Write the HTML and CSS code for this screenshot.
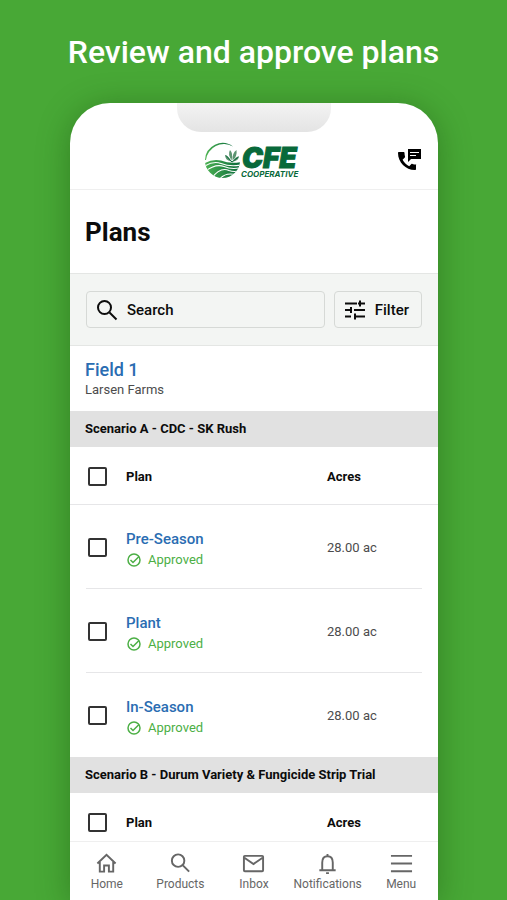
FILE: index.html
```html
<!DOCTYPE html>
<html lang="en">
<head>
<meta charset="utf-8">
<meta name="viewport" content="width=device-width, initial-scale=1">
<title>Plans</title>
<link rel="stylesheet" href="styles.css">
</head>
<body>
<h1 class="headline">Review and approve plans</h1>
<div class="phone">
  <div class="notch"></div>
  <header class="topbar">
    <svg class="logo" viewBox="0 0 102 42" role="img" aria-label="CFE Cooperative">
      <defs>
        <linearGradient id="leaf" x1="0" x2="1"><stop offset="0" stop-color="#4fb553"/><stop offset="1" stop-color="#08693a"/></linearGradient>
        <clipPath id="globe"><circle cx="19.500" cy="22.500" r="17.500"/></clipPath>
      </defs>
      <path d="M2 22A17.500 17.500 0 0 1 30 8.500A18 18 0 0 0 3 22Z" fill="url(#leaf)"/>
      <g clip-path="url(#globe)">
        <path d="M2 25Q10 20.500 18 22.500Q27 26 38 24V42H0Z" fill="url(#leaf)"/>
        <path d="M0 29Q10 22.500 18 25.500Q27 29 38 27M0 35Q12 25 21 28.500Q29 32 38 29.500M8 41Q17 28.500 26 32.500Q31 34.500 38 32.500M16 42Q22 33.500 34 37" fill="none" stroke="#fff" stroke-width="1.100"/>
      </g>
      <path d="M28 23.500Q26 18 22 17Q22 22 28 23.500ZM28.500 22.500Q24.500 16 27 12Q30.500 15.500 28.500 22.500ZM29.500 22.500Q29 15 33.500 12Q34.500 18.500 29.500 22.500ZM30 23.500Q32 18.500 36 18.500Q35 23 30 23.500Z" fill="#5c9470"/>
      <path d="M23 17.500L29 24L35.500 19" fill="none" stroke="#08693a"/>
      <text class="logo-name" x="39" y="30">CFE</text>
      <text class="logo-sub" x="38" y="39">COOPERATIVE</text>
    </svg>
    <button class="contact" type="button" aria-label="Contact">
      <svg viewBox="0 0 24 24"><path d="M20 15.500c-1.200 0-2.400-.2-3.600-.6-.3-.1-.7 0-1 .2l-2.200 2.200c-2.800-1.400-5.100-3.800-6.600-6.600l2.200-2.200c.3-.3.4-.7.2-1C8.700 6.400 8.500 5.200 8.500 4c0-.6-.4-1-1-1H3c-.6 0-1 .4-1 1 0 9.400 7.600 17 17 17 .6 0 1-.4 1-1v-3.500c0-.6.5-1 0-1z" transform="translate(-2 2)"/><path fill-rule="evenodd" d="M10 2h13v10H13l-3 3ZM12 5v1h9V5ZM12 8v1h6V8Z"/></svg>
    </button>
  </header>
  <main class="content">
    <h2 class="title">Plans</h2>
    <form class="tools">
      <div class="search">
        <svg viewBox="0 0 24 24"><circle cx="9.500" cy="9.500" r="6.500"/><path d="M14.500 14.500L21.500 21.500"/></svg>
        <input id="search" type="text" placeholder="Search" aria-label="Search">
      </div>
      <button class="filter" type="button">
        <svg viewBox="0 0 24 24"><path d="M2 5.500h12M15 5.500h7M17 2.500v6M2 12h6M11 12h11M8 9v6M2 18.500h6M11 18.500h11M12 15.500v6"/></svg>
        Filter
      </button>
    </form>
    <section class="field">
      <a class="field-name" href="#">Field 1</a>
      <p class="farm">Larsen Farms</p>
    </section>
    <h3 class="band">Scenario A - CDC - SK Rush</h3>
    <table class="plans">
      <thead>
        <tr><th class="tick"><input type="checkbox" aria-label="Select all plans in scenario A"></th><th>Plan</th><th class="acres">Acres</th></tr>
      </thead>
      <tbody>
        <tr>
          <td class="tick"><input type="checkbox" aria-label="Select Pre-Season"></td>
          <td class="name"><a class="plan" href="#">Pre-Season</a><span class="status"><svg viewBox="0 0 16 16"><circle cx="8" cy="8" r="6"/><path d="M4.500 8L7 10.500L13 4.500"/></svg>Approved</span></td>
          <td class="acres">28.00 ac</td>
        </tr>
        <tr>
          <td class="tick"><input type="checkbox" aria-label="Select Plant"></td>
          <td class="name"><a class="plan" href="#">Plant</a><span class="status"><svg viewBox="0 0 16 16"><circle cx="8" cy="8" r="6"/><path d="M4.500 8L7 10.500L13 4.500"/></svg>Approved</span></td>
          <td class="acres">28.00 ac</td>
        </tr>
        <tr>
          <td class="tick"><input type="checkbox" aria-label="Select In-Season"></td>
          <td class="name"><a class="plan" href="#">In-Season</a><span class="status"><svg viewBox="0 0 16 16"><circle cx="8" cy="8" r="6"/><path d="M4.500 8L7 10.500L13 4.500"/></svg>Approved</span></td>
          <td class="acres">28.00 ac</td>
        </tr>
      </tbody>
    </table>
    <h3 class="band">Scenario B - Durum Variety &amp; Fungicide Strip Trial</h3>
    <table class="plans">
      <thead>
        <tr><th class="tick"><input type="checkbox" aria-label="Select all plans in scenario B"></th><th>Plan</th><th class="acres">Acres</th></tr>
      </thead>
    </table>
  </main>
  <nav class="tabs">
    <a href="#"><svg viewBox="0 0 24 24"><path d="M2.500 12L12 3L21.500 12M5 10.500V20.500H9.500V14H14.500V20.500H19V10.500"/></svg>Home</a>
    <a href="#"><svg viewBox="0 0 24 24"><circle cx="9.500" cy="9" r="6.500"/><path d="M14.500 14L21 20.500"/></svg>Products</a>
    <a href="#"><svg viewBox="0 0 24 24"><rect x="2" y="4" width="20" height="16" rx="1"/><path d="M2.500 6L12 12.500L21.500 6"/></svg>Inbox</a>
    <a href="#"><svg viewBox="0 0 24 24"><path d="M3.500 19H20.500M6.500 19V11Q6.500 4.500 12 4.500Q17.500 4.500 17.500 11V19M12 2V4.500M10.500 22H13.500"/></svg>Notifications</a>
    <a href="#"><svg viewBox="0 0 24 24"><path d="M1 4H23M1 12H23M1 20H23"/></svg>Menu</a>
  </nav>
</div>
</body>
</html>
```
FILE: styles.css
```css
* { box-sizing: border-box; }

body {
  margin: 0;
  height: 100vh;
  display: flex;
  flex-direction: column;
  background: #48a836;
  color: #0c0c0c;
  font-family: Roboto, "Liberation Sans", sans-serif;
  overflow: hidden;
}

h1, h2, h3, p { margin: 0; }
a { text-decoration: none; color: inherit; }
svg { display: block; flex: none; }

.headline {
  padding: 32px 0 31px;
  color: #fff;
  font-size: 32px;
  line-height: 40px;
  font-weight: 500;
  text-align: center;
  white-space: nowrap;
}

.phone {
  position: relative;
  flex: 1;
  min-height: 0;
  display: flex;
  flex-direction: column;
  margin: 0 69px 0 70px;
  background: #fff;
  border-radius: 40px 40px 0 0;
  box-shadow: 0 4px 32px rgba(20, 70, 10, 0.4);
}

.notch {
  align-self: center;
  width: 154px;
  height: 29px;
  border-radius: 0 0 24px 24px;
  background: linear-gradient(#f3f3f3, #e4e4e4);
}

.topbar {
  display: grid;
  grid-template-columns: 1fr auto 1fr;
  align-items: center;
  padding: 6px 16px 9px;
  border-bottom: 1px solid #efefef;
}

.logo {
  grid-column: 2;
  width: 102px;
  height: 42px;
}

.logo text { font-family: Inter, sans-serif; font-style: italic; fill: #08693a; }
.logo .logo-name { font-size: 28px; font-weight: 900; stroke: #08693a; }
.logo .logo-sub { font-size: 8px; font-weight: 700; }

.contact {
  justify-self: end;
  padding: 0;
  border: 0;
  background: none;
}

.contact svg { width: 24px; height: 24px; }

.content { flex: 1; min-height: 0; overflow: hidden; }

.title {
  padding: 26px 15px 25px;
  font-size: 26px;
  line-height: 32px;
  font-weight: 700;
}

.tools {
  display: flex;
  gap: 9px;
  padding: 17px 16px;
  background: #f3f5f3;
  border-top: 1px solid #e4e6e4;
  border-bottom: 1px solid #e4e6e4;
}

.search, .filter {
  display: flex;
  align-items: center;
  gap: 8px;
  height: 37px;
  padding: 0 12px 0 8px;
  border: 1px solid #d6d9d6;
  border-radius: 4px;
  background: none;
  color: #0c0c0c;
  font: 500 15px Roboto, "Liberation Sans", sans-serif;
}

.search { flex: 1; min-width: 0; }

.search input {
  flex: 1;
  min-width: 0;
  padding: 0;
  border: 0;
  outline: 0;
  background: none;
  color: inherit;
  font: inherit;
}

.search input::placeholder { color: #0c0c0c; opacity: 1; }

.search svg, .filter svg {
  width: 24px;
  height: 24px;
  fill: none;
  stroke: #0c0c0c;
  stroke-width: 2;
}

.field { padding: 13px 15px 12px; }

.field-name {
  display: block;
  color: #2a6db2;
  font-size: 18px;
  line-height: 22px;
  font-weight: 500;
}

.farm { color: #4c4c4c; font-size: 13px; line-height: 18px; }

.band {
  padding: 8px 15px;
  background: #e1e1e1;
  font-size: 13px;
  line-height: 20px;
  font-weight: 700;
}

.plans {
  width: 100%;
  border-collapse: collapse;
  table-layout: fixed;
}

.plans th, .plans td { padding: 0; text-align: left; }
.plans th { height: 58px; font-size: 13px; font-weight: 700; }
.plans td { height: 84px; }
.plans .tick { width: 56px; padding-left: 18px; }
.plans .acres { width: 111px; }
.plans td.acres { color: #4c4c4c; font-size: 13px; }
.plans td.name { padding-top: 3px; }
.plans thead tr { background: linear-gradient(#e6e6e8, #e6e6e8) bottom / 100% 1px no-repeat; }
.plans tbody tr { background: linear-gradient(#e6e6e8, #e6e6e8) bottom / calc(100% - 32px) 1px no-repeat; }
.plans tbody tr:last-child { background: none; }

.tick input {
  appearance: none;
  display: block;
  width: 19px;
  height: 19px;
  margin: 0;
  border: 2px solid #333;
  border-radius: 2px;
}

.plan {
  display: block;
  color: #2a6db2;
  font-size: 15px;
  line-height: 22px;
  font-weight: 500;
}

.status {
  display: flex;
  align-items: center;
  gap: 6px;
  color: #4caf45;
  font-size: 13px;
  line-height: 20px;
}

.status svg {
  width: 16px;
  height: 16px;
  fill: none;
  stroke: #4caf45;
  stroke-width: 1.5;
}

.tabs {
  display: grid;
  grid-template-columns: repeat(5, 1fr);
  height: 59px;
  border-top: 1px solid #efefef;
  background: #fff;
}

.tabs a {
  display: flex;
  flex-direction: column;
  align-items: center;
  gap: 1px;
  padding-top: 10px;
  color: #666;
  font-size: 12px;
  line-height: 16px;
}

.tabs svg {
  width: 23px;
  height: 23px;
  fill: none;
  stroke: #666;
  stroke-width: 2;
}
```
